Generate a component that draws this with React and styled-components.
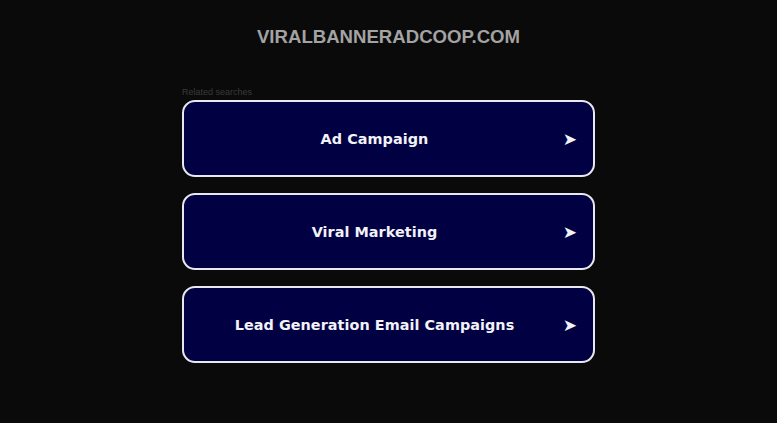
import React from "react";
import styled, { createGlobalStyle } from "styled-components";

const GlobalStyle = createGlobalStyle`
  html, body {
    margin: 0;
    padding: 0;
    background: #0a0a0a;
  }
`;

const Page = styled.div`
  width: 777px;
  height: 423px;
  background: #0a0a0a;
  display: flex;
  flex-direction: column;
  align-items: center;
  padding-top: 26px;
  box-sizing: border-box;
`;

const Domain = styled.h1`
  margin: 0;
  font-family: "Liberation Sans", Arial, sans-serif;
  font-size: 18.6px;
  line-height: 22px;
  font-weight: bold;
  color: #a3a3a3;
`;

const Results = styled.div`
  width: 413px;
  margin-top: 39px;
  display: flex;
  flex-direction: column;
  gap: 16px;
`;

const Caption = styled.div`
  font-family: "Liberation Sans", Arial, sans-serif;
  font-size: 9px;
  line-height: 11px;
  color: #3a3a3a;
  margin-bottom: -14px;
`;

const LinkButton = styled.a`
  height: 77px;
  box-sizing: border-box;
  border: 2px solid #e8e8f0;
  border-radius: 13px;
  background: #000042;
  display: flex;
  align-items: center;
  padding-left: 20px;
  text-decoration: none;
  cursor: pointer;
`;

const Label = styled.span`
  flex: 1;
  text-align: center;
  font-family: "DejaVu Sans", Verdana, sans-serif;
  font-weight: bold;
  font-size: 14.4px;
  color: #f2f2f7;
  letter-spacing: 0.05px;
`;

const Arrow = styled.span`
  width: 48px;
  padding-right: 16px;
  box-sizing: border-box;
  text-align: right;
  font-family: "DejaVu Sans", sans-serif;
  font-size: 17px;
  color: #f2f2f7;
`;

const searches = ["Ad Campaign", "Viral Marketing", "Lead Generation Email Campaigns"];

export default function App() {
  return (
    <>
      <GlobalStyle />
      <Page>
        <Domain>VIRALBANNERADCOOP.COM</Domain>
        <Results>
          <Caption>Related searches</Caption>
          {searches.map((s) => (
            <LinkButton key={s}>
              <Label>{s}</Label>
              <Arrow>➤</Arrow>
            </LinkButton>
          ))}
        </Results>
      </Page>
    </>
  );
}
